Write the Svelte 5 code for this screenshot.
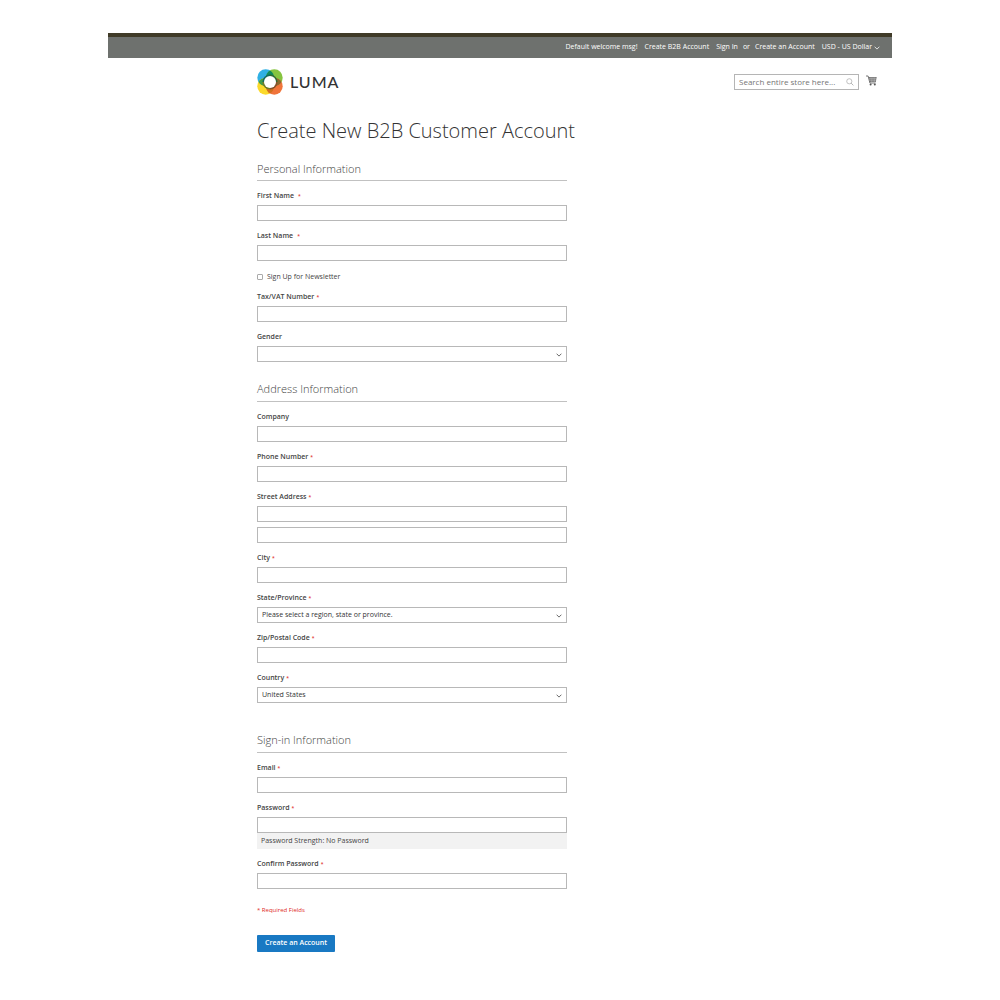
<script lang="ts">
  interface Field {
    id: string;
    label: string;
    type?: string;
    required?: boolean;
    wide?: boolean;
    lines?: number;
    options?: string[];
  }

  const personal: Field[] = [
    { id: 'firstname', label: 'First Name', required: true, wide: true },
    { id: 'lastname', label: 'Last Name', required: true, wide: true }
  ];

  const extra: Field[] = [
    { id: 'taxvat', label: 'Tax/VAT Number', required: true },
    { id: 'gender', label: 'Gender', options: ['', 'Male', 'Female', 'Not Specified'] }
  ];

  const address: Field[] = [
    { id: 'company', label: 'Company' },
    { id: 'telephone', label: 'Phone Number', type: 'tel', required: true },
    { id: 'street', label: 'Street Address', required: true, lines: 2 },
    { id: 'city', label: 'City', required: true },
    { id: 'region', label: 'State/Province', required: true, options: ['Please select a region, state or province.'] },
    { id: 'zip', label: 'Zip/Postal Code', required: true },
    { id: 'country', label: 'Country', required: true, options: ['United States'] }
  ];

  let password = $state('');
  let strength = $derived(
    password.length === 0 ? 'No Password' : password.length < 8 ? 'Weak' : password.length < 12 ? 'Medium' : 'Strong'
  );
</script>

{#snippet caption(f: Field)}
  <label class="label" class:label--wide={f.wide} for={f.id}>
    {f.label}{#if f.required}<span class="star">*</span>{/if}
  </label>
{/snippet}

{#snippet chevron()}
  <svg class="chevron" viewBox="0 0 6 4" aria-hidden="true">
    <path d="M.6.7 3 3.1 5.4.7" fill="none" stroke="currentColor" stroke-width=".8" />
  </svg>
{/snippet}

{#snippet fields(list: Field[])}
  {#each list as f}
    <div class="field">
      {@render caption(f)}
      {#if f.options}
        <div class="select">
          <select class="control" id={f.id} name={f.id}>
            {#each f.options as option}
              <option>{option}</option>
            {/each}
          </select>
          {@render chevron()}
        </div>
      {:else}
        <input class="control" id={f.id} name={f.id} type={f.type ?? 'text'} />
        {#if f.lines === 2}
          <input class="control control--next" name="{f.id}_2" type="text" aria-label="{f.label} line 2" />
        {/if}
      {/if}
    </div>
  {/each}
{/snippet}

<div class="page">
  <header>
    <div class="panel">
      <span>Default welcome msg!</span>
      <a href="#b2b">Create B2B Account</a>
      <span class="auth">
        <a href="#signin">Sign In</a>
        <span>or</span>
        <a href="#create">Create an Account</a>
      </span>
      <button class="currency" type="button">
        USD - US Dollar
        {@render chevron()}
      </button>
    </div>

    <div class="header-content">
      <a class="logo" href="#home" aria-label="LUMA">
        <svg class="logo-mark" viewBox="0 0 26 26" aria-hidden="true">
          <circle cx="8.7" cy="8.7" r="8.4" fill="#2fb0e4" />
          <circle cx="17.3" cy="8.7" r="8.4" fill="#86c440" />
          <circle cx="8.7" cy="17.3" r="8.4" fill="#fbd92b" />
          <circle cx="17.3" cy="17.3" r="8.4" fill="#f0743a" />
          <path d="M13 1.5a8.4 8.4 0 0 1 0 14.4 8.4 8.4 0 0 1 0-14.4z" fill="#0f8a5c" />
          <path d="M13 10.1a8.4 8.4 0 0 1 0 14.4 8.4 8.4 0 0 1 0-14.4z" fill="#d0701f" />
          <path d="M1.5 13a8.4 8.4 0 0 1 14.4 0 8.4 8.4 0 0 1-14.4 0z" fill="#3f9d4a" />
          <path d="M10.1 13a8.4 8.4 0 0 1 14.4 0 8.4 8.4 0 0 1-14.4 0z" fill="#8a6a2c" />
          <path d="M13 5.4A7.6 7.6 0 0 0 5.4 13H13z" fill="#14695a" />
          <path d="M13 5.4a7.6 7.6 0 0 1 7.6 7.6H13z" fill="#2f6b35" />
          <path d="M5.4 13a7.6 7.6 0 0 0 7.6 7.6V13z" fill="#6f7a2a" />
          <path d="M20.6 13a7.6 7.6 0 0 1-7.6 7.6V13z" fill="#85502a" />
          <circle cx="13" cy="13" r="6" fill="#fff" />
        </svg>
        <span class="logo-text">LUMA</span>
      </a>

      <form class="search" role="search">
        <input type="search" aria-label="Search" placeholder="Search entire store here..." />
        <button type="button" aria-label="Search">
          <svg viewBox="0 0 9 9" aria-hidden="true">
            <circle cx="3.7" cy="3.7" r="2.9" fill="none" stroke="#aaa" stroke-width=".8" />
            <path d="M5.8 5.8 8.3 8.3" stroke="#aaa" />
          </svg>
        </button>
      </form>

      <a class="cart" href="#cart" aria-label="My Cart">
        <svg viewBox="0 0 11 11" aria-hidden="true">
          <path d="M0 1h2.1l1.8 7h5.7" fill="none" stroke="#666" stroke-width=".9" />
          <path d="M2.5 2h8.2L9.8 7H3.9z" fill="#757575" />
          <path d="M3 3.6h7.4M3.4 5.2h6.8M5 2l.4 5M7 2v5M8.9 2l-.5 5" stroke="#d5d5d5" stroke-width=".35" />
          <circle cx="4.6" cy="9.6" r="1" fill="#555" />
          <circle cx="8.8" cy="9.6" r="1" fill="#555" />
        </svg>
      </a>
    </div>
  </header>

  <main>
    <h1>Create New B2B Customer Account</h1>

    <form class="account">
      <fieldset>
        <legend>Personal Information</legend>
        {@render fields(personal)}
        <div class="choice">
          <input type="checkbox" id="newsletter" name="newsletter" />
          <label for="newsletter">Sign Up for Newsletter</label>
        </div>
        {@render fields(extra)}
      </fieldset>

      <fieldset class="fieldset--address">
        <legend>Address Information</legend>
        {@render fields(address)}
      </fieldset>

      <fieldset class="fieldset--signin">
        <legend>Sign-in Information</legend>
        {@render fields([{ id: 'email', label: 'Email', type: 'email', required: true }])}
        <div class="field">
          {@render caption({ id: 'password', label: 'Password', required: true })}
          <input class="control" id="password" type="password" bind:value={password} />
          <div class="meter" aria-live="polite">Password Strength: {strength}</div>
        </div>
        {@render fields([{ id: 'confirm', label: 'Confirm Password', type: 'password', required: true }])}
      </fieldset>

      <p class="note">* Required Fields</p>
      <button class="submit" type="button">Create an Account</button>
    </form>
  </main>
</div>

<style>
  :global(body) {
    background: #fff;
    color: #444;
    font-family: 'Open Sans', 'Noto Sans', sans-serif;
    font-size: 7px;
    line-height: 10px;
  }

  .page {
    max-width: 784px;
    margin: 0 auto;
    padding: 33px 16px;
  }

  a {
    color: inherit;
    text-decoration: none;
  }

  button,
  input,
  select {
    box-sizing: border-box;
    margin: 0;
    font: inherit;
    color: inherit;
  }

  .panel {
    display: flex;
    justify-content: flex-end;
    align-items: center;
    gap: 7px;
    height: 19px;
    padding: 0 12px 2px;
    border-top: 4px solid #403b28;
    background: #6e716e;
    color: #fff;
  }

  .auth {
    display: flex;
    gap: 5px;
  }

  .currency {
    display: flex;
    align-items: center;
    gap: 2px;
    padding: 0;
    border: 0;
    background: none;
  }

  .header-content,
  main {
    padding: 0 15px 0 149px;
  }

  .header-content {
    display: flex;
    align-items: center;
    height: 48px;
  }

  .logo {
    display: flex;
    align-items: center;
    gap: 7px;
    margin-right: auto;
  }

  .logo-mark {
    width: 26px;
    height: 26px;
  }

  .logo-text {
    color: #333;
    font-family: Lato, sans-serif;
    font-size: 16px;
    font-weight: 500;
    line-height: 20px;
    letter-spacing: 1px;
  }

  .search {
    display: flex;
    align-items: center;
    box-sizing: border-box;
    width: 125px;
    height: 16px;
    padding: 0 4px;
    border: 1px solid #b5b5b5;
  }

  .search input {
    flex: 1;
    min-width: 0;
    padding: 0;
    border: 0;
    outline: 0;
    background: none;
    font-size: 8px;
  }

  .search input::placeholder {
    color: #757575;
    opacity: 1;
  }

  .search button {
    display: flex;
    padding: 0;
    border: 0;
    background: none;
  }

  .search svg {
    width: 8px;
    height: 8px;
  }

  .cart {
    display: flex;
    margin-left: 7px;
    padding-bottom: 4px;
  }

  .cart svg {
    width: 11px;
    height: 11px;
  }

  h1 {
    margin: 12px 0 17px;
    color: #333;
    font-size: 20px;
    font-weight: 300;
    line-height: 26px;
  }

  .account {
    width: 50%;
  }

  fieldset {
    min-width: 0;
    margin: 0;
    padding: 0;
    border: 0;
  }

  .fieldset--address {
    margin-top: 9px;
  }

  .fieldset--signin {
    margin-top: 19px;
  }

  legend {
    box-sizing: border-box;
    width: 100%;
    margin-bottom: 10px;
    padding: 0 0 3px;
    border-bottom: 1px solid #c1c1c1;
    color: #444;
    font-size: 11px;
    font-weight: 300;
    line-height: 16px;
  }

  .fieldset--address legend,
  .fieldset--signin legend {
    padding-bottom: 4px;
  }

  .field {
    margin-bottom: 10px;
  }

  .label {
    display: flex;
    gap: 2px;
    margin-bottom: 4px;
    font-weight: 600;
  }

  .label--wide {
    gap: 4px;
  }

  .star {
    color: #e02b27;
    font-size: 5px;
    font-weight: 600;
  }

  .control {
    display: block;
    width: 100%;
    height: 16px;
    padding: 0 5px;
    border: 1px solid #b8b8b8;
    border-radius: 0;
    background: #fff;
  }

  .control--next {
    margin-top: 5px;
  }

  .select {
    display: grid;
    align-items: center;
  }

  .select > :global(*) {
    grid-area: 1 / 1;
  }

  select.control {
    padding: 0 4px;
    color: #333;
    appearance: none;
  }

  .chevron {
    width: 6px;
    height: 4px;
    padding-top: 2px;
  }

  .select .chevron {
    justify-self: end;
    margin-right: 5px;
    pointer-events: none;
  }

  .choice {
    display: flex;
    align-items: center;
    gap: 4px;
    height: 12px;
    margin-bottom: 9px;
  }

  .choice input {
    appearance: none;
    width: 6px;
    height: 6px;
    border: 1px solid #aaa;
    border-radius: 1px;
    background: #fff;
  }

  .choice input:checked {
    background: #1979c3;
  }

  .meter {
    padding: 3px 4px;
    background: #f2f2f2;
  }

  .note {
    margin: 6px 0 20px;
    color: #e02b27;
    font-size: 6px;
  }

  .submit {
    display: block;
    height: 17px;
    padding: 0 8px 2px;
    border: 0;
    border-radius: 1px;
    background: #1979c3;
    color: #fff;
    font-weight: 600;
  }
</style>
